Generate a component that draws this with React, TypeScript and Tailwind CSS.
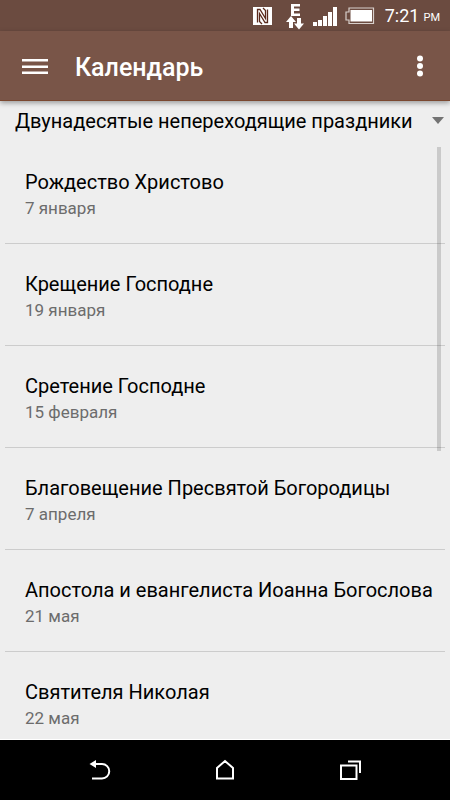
import { useState } from 'react';

interface Feast {
  title: string;
  date: string;
}

const CATEGORY = 'Двунадесятые непереходящие праздники';

const FEASTS: Feast[] = [
  { title: 'Рождество Христово', date: '7 января' },
  { title: 'Крещение Господне', date: '19 января' },
  { title: 'Сретение Господне', date: '15 февраля' },
  { title: 'Благовещение Пресвятой Богородицы', date: '7 апреля' },
  { title: 'Апостола и евангелиста Иоанна Богослова', date: '21 мая' },
  { title: 'Святителя Николая', date: '22 мая' },
];

function StatusBar() {
  return (
    <div className="flex h-[31px] shrink-0 items-center justify-end bg-[#6b4b40] pr-[10px] text-white">
      {/* NFC */}
      <svg width="20" height="20" viewBox="0 0 20 20" className="mr-3">
        <path d="M0 1h19v18H0z" fill="#fff" />
        <path
          d="M4.500 16.500V3.500h2.500l5.500 9V4.500L10 2M14.500 3.500v13h-2.500L6.500 7.500v8L9 18"
          fill="none"
          stroke="#5a2a1c"
          strokeWidth="1.300"
        />
      </svg>
      {/* EDGE data */}
      <svg width="20" height="28" viewBox="0 0 20 28" className="mr-2" fill="#fff">
        <path d="M6 2h9v2.500H9v2h5.500V9H9v2.500h6V14H6z" />
        <path d="M6 14l5 6H8v6H4v-6H1zM14 27.500l5-6h-3v-5.500h-4v5.500H9z" />
      </svg>
      <svg width="25" height="20" viewBox="0 0 25 20" className="mr-[7px]" fill="#fff">
        <path d="M0 16h4v4H0zM5 14h4v6H5zM10 10h4v10h-4zM15 6h4v14h-4zM20 1h4v19h-4z" />
      </svg>
      <svg width="30" height="18" viewBox="0 0 30 18" className="mr-[10px]">
        <path d="M4 1h24.500v15.500H4V13H1V5h3z" fill="none" stroke="#d8cfcb" strokeWidth="1.200" />
        <path d="M5.500 3h21.500v11.500H5.500z" fill="#fff" />
      </svg>
      <span className="text-[18px] leading-5">7:21</span>
      <span className="ml-1 pt-1 text-[11px] leading-4">PM</span>
    </div>
  );
}

function AppBar() {
  return (
    <header className="z-10 flex h-[70px] shrink-0 items-center border-b border-[#7b4830] bg-[#795548] pr-[10px] pl-[22px] text-white shadow-[0_2px_5px_rgba(0,0,0,0.35)]">
      <button type="button" aria-label="Меню">
        <svg width="26" height="18" viewBox="0 0 26 18" fill="#fff">
          <path d="M0 2h26v2.500H0zM0 8.500h26V11H0zM0 14.500h26V17H0z" />
        </svg>
      </button>
      <h1 className="ml-[27px] flex-1 pt-1 text-[25px] leading-8 font-medium">Календарь</h1>
      <button type="button" aria-label="Ещё" className="flex w-10 justify-center">
        <svg width="8" height="22" viewBox="0 0 8 22" fill="#fff">
          <circle cx="4" cy="3.500" r="3" />
          <circle cx="4" cy="11" r="3" />
          <circle cx="4" cy="18.500" r="3" />
        </svg>
      </button>
    </header>
  );
}

function NavBar() {
  return (
    <nav className="flex h-[61px] shrink-0 items-center justify-center gap-[101px] border-t border-white bg-black text-white">
      <button type="button" aria-label="Назад">
        <svg width="24" height="24" viewBox="0 0 24 24" fill="none" stroke="#fff" strokeWidth="2">
          <path d="M6 6h8a7.200 7.200 0 0 1 0 14.500H4" />
          <path d="M1.500 6L8 2v8z" fill="#fff" stroke="none" />
        </svg>
      </button>
      <button type="button" aria-label="Домой">
        <svg width="24" height="24" viewBox="0 0 24 24" fill="none" stroke="#fff" strokeWidth="2">
          <path d="M4 20.500V10l8-7 8 7v10.500z" />
        </svg>
      </button>
      <button type="button" aria-label="Недавние">
        <svg width="24" height="24" viewBox="0 0 24 24" fill="none" stroke="#fff" strokeWidth="2">
          <path d="M3 7.500h15.500v13.500H3z" />
          <path d="M10 3.500h12V15" />
        </svg>
      </button>
    </nav>
  );
}

export default function App() {
  const [category, setCategory] = useState(CATEGORY);

  return (
    <div className="flex h-screen flex-col bg-[#eeeeee] font-[Roboto,sans-serif] text-black">
      <StatusBar />
      <AppBar />
      <label className="flex h-[41px] shrink-0 items-center pr-[6px] pb-[2px] pl-[15px]">
        <select
          aria-label="Категория"
          value={category}
          onChange={e => setCategory(e.target.value)}
          className="min-w-0 flex-1 appearance-none bg-transparent text-[20px] leading-6 outline-none"
        >
          <option value={CATEGORY}>{CATEGORY}</option>
        </select>
        <svg width="12" height="7" viewBox="0 0 12 7" fill="#737373">
          <path d="M0 0h12L6 7z" />
        </svg>
      </label>
      <main className="relative min-h-0 flex-1 overflow-hidden">
        <ul className="px-[5px]">
          {FEASTS.map(feast => (
            <li
              key={feast.title}
              className="flex h-[102px] flex-col justify-center border-b border-[#cccccc] px-5 pt-[3px] whitespace-nowrap"
            >
              <span className="text-[20px] leading-7">{feast.title}</span>
              <span className="text-[17px] leading-6 text-[#6c6c6c]">{feast.date}</span>
            </li>
          ))}
        </ul>
        {/* scroll indicator */}
        <div className="absolute top-[5px] right-[9px] h-[51%] w-1 bg-black/15" />
      </main>
      <NavBar />
    </div>
  );
}
